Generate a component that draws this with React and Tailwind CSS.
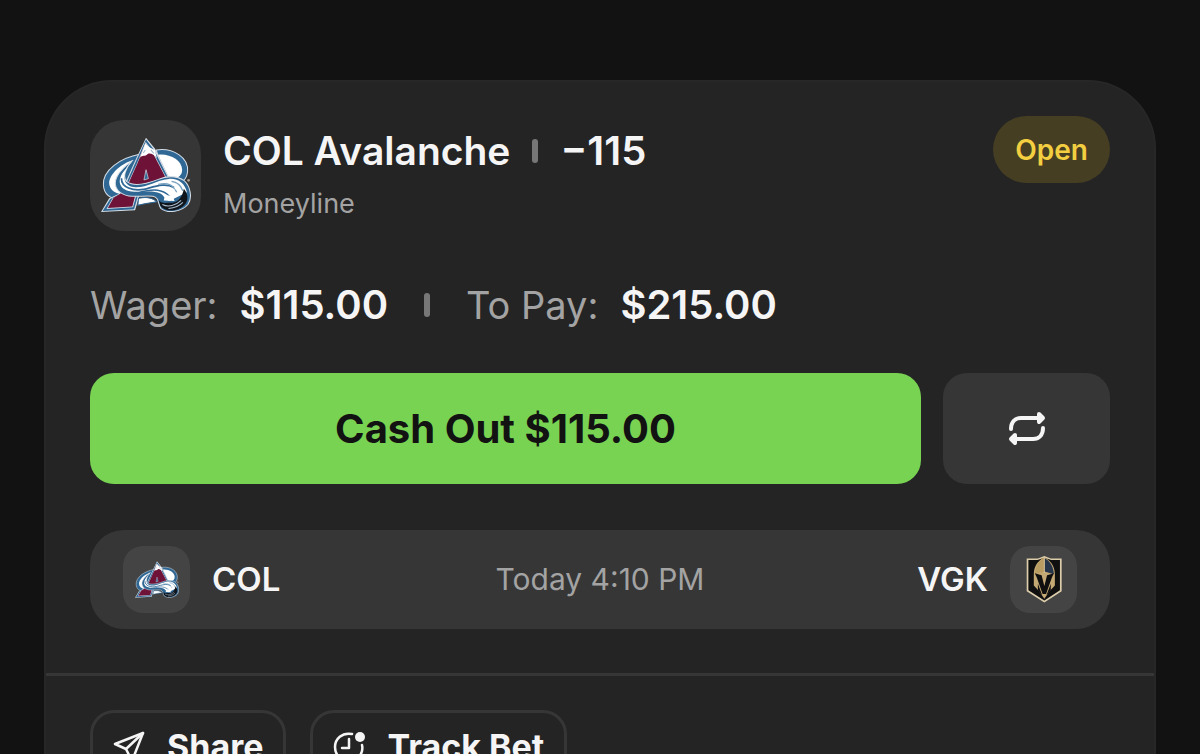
function AvalancheLogo({ className }) {
  return (
    <svg viewBox="50 72 264 224" className={className} aria-hidden="true">
      {/* ring behind the letter */}
      <path d="M212 110C262 103 308 132 304 174C302 192 294 202 280 208L236 188Z" fill="#2f6795" stroke="#d5dde5" strokeWidth="3" />
      <path d="M217 124C252 120 287 140 288 168C288 184 276 194 262 192L246 186Z" fill="#fff" />
      <path d="M166 122C104 134 55 170 57 212C58 240 78 255 112 258L150 262L150 180Z" fill="#2f6795" stroke="#d5dde5" strokeWidth="3" />
      <path d="M146 139C104 152 74 184 74 208C75 226 88 236 108 240C94 214 108 178 146 139Z" fill="#fff" />

      {/* letter */}
      <path d="M182 74L208 106L250 190L226 216L168 226L150 287L50 292L74 252L108 236L148 146Z" fill="#d5dde5" />
      <path d="M182 79L205 109L246 190L224 213L164 224L147 284L55 289L77 254L112 236L151 147Z" fill="#2f6795" />
      <path d="M181 87L201 113L241 190L220 210L160 220L144 278L66 283L84 252L118 232L156 148Z" fill="#d5dde5" />
      <path d="M181 91L200 115L239 190L215 208L157 218L142 276L70 280L87 250L121 230L157 149Z" fill="#6f1238" />
      <path d="M182 168L189 194L176 198Z" fill="#2f6795" stroke="#d5dde5" strokeWidth="2" />
      <path d="M180 90L164 133C172 122 178 132 188 121C198 119 207 126 214 134L208 110L192 102Z" fill="#fff" />
      <path d="M180 110L174 119M196 110L205 120" stroke="#9fb8cb" strokeWidth="3" fill="none" />

      {/* snow sweep */}
      <path d="M140 143C98 174 80 205 100 229C124 256 170 242 202 246C222 249 216 270 226 282C246 297 286 292 305 270C319 250 312 216 294 200C270 184 240 187 216 197C180 211 144 216 126 203C112 190 122 164 140 143Z" fill="#2f6795" stroke="#d5dde5" strokeWidth="3" />
      <path d="M128 160C98 190 98 216 124 228C154 240 196 224 224 238C235 244 238 256 250 260L302 234C296 208 276 192 248 195C210 199 180 224 146 219C116 214 112 188 128 160Z" fill="#fff" />
      <path d="M110 193C109 220 144 232 178 225C212 216 238 206 264 220" stroke="#2f6795" strokeWidth="5" fill="none" />
      <path d="M158 236C198 225 220 224 242 238L256 251" stroke="#2f6795" strokeWidth="4" fill="none" />
      <path d="M218 211C248 204 262 214 272 234M257 202C274 204 284 213 290 230" stroke="#77a1bf" strokeWidth="4" fill="none" />
      <path d="M160 252C178 248 200 249 214 262C200 264 184 266 158 272Z" fill="#fff" stroke="#2f6795" strokeWidth="3" />
      <path d="M220 258C231 270 246 263 260 265C277 264 289 247 293 224C309 243 306 264 290 276C270 292 237 292 224 274Z" fill="#10151b" />
      <path d="M272 208L280 229L264 224L274 246L256 238L266 260L234 258L238 242L254 244L246 226L264 232Z" fill="#fff" />
      <path d="M230 270C247 279 270 273 285 258M248 282C267 280 279 276 290 264" stroke="#a9bdcd" strokeWidth="3" fill="none" />
      <circle cx="307" cy="199" r="4" fill="#a59b91" />
    </svg>
  );
}

function KnightsLogo({ className }) {
  return (
    <svg viewBox="66 50 106 138" className={className} aria-hidden="true">
      <path d="M68 57H101L120 50L139 57H171V154L120 187L68 154Z" fill="#dccdab" />
      <path d="M73 62H100L120 55L140 62H166V151L120 181L73 151Z" fill="#100f10" />
      {/* helmet */}
      <path d="M120 54C101 64 90 80 89 102V137L104 153L120 176L136 153L151 137V102C150 80 139 64 120 54Z" fill="#c5a974" />
      <path d="M121 56C138 67 147 82 148 104L121 96Z" fill="#26354a" />
      <path d="M119 56C102 67 94 82 92 104L119 96Z" fill="#b99c62" />
      {/* visor */}
      <path d="M92 101L112 107L120 138L128 107L148 101L142 114L125 162H115L98 114Z" fill="#100f10" />
      <path d="M101 132L114 166L101 151ZM139 132L126 166L139 151Z" fill="#100f10" />
      <path d="M120 52V100" stroke="#e1d1aa" strokeWidth="2" />
    </svg>
  );
}

function RepeatIcon() {
  return (
    <svg viewBox="0 0 38 36" className="h-9 w-[38px]" fill="none" stroke="currentColor" strokeWidth="4" strokeLinecap="round" strokeLinejoin="round" aria-hidden="true">
      <path d="M3 18C3 11 7 7 13 7H32" />
      <path d="M31 3L35 7L31 11Z" fill="currentColor" />
      <path d="M35 17C35 24 31 28 25 28H6" />
      <path d="M7 24L3 28L7 32Z" fill="currentColor" />
    </svg>
  );
}

function ShareIcon() {
  return (
    <svg viewBox="0 0 32 32" className="size-8" fill="none" stroke="currentColor" strokeWidth="2.5" strokeLinecap="round" strokeLinejoin="round" aria-hidden="true">
      <path d="M30 2L2 13L13 18L19 30Z" />
      <path d="M30 2L13 18" />
    </svg>
  );
}

function TrackIcon() {
  return (
    <svg viewBox="0 0 32 32" className="size-8" fill="none" stroke="currentColor" strokeWidth="2.5" strokeLinecap="round" aria-hidden="true">
      <path d="M19 3C9 1 2 8 2 16C2 24 8 30 16 30C24 30 31 23 29 14" />
      <path d="M16 8V17H9" strokeLinejoin="round" />
      <circle cx="27" cy="6" r="5" fill="currentColor" stroke="none" />
    </svg>
  );
}

function Divider() {
  return <span className="block h-6 w-[6px] shrink-0 rounded-full bg-[#777777]" />;
}

function ActionButton({ icon, label }) {
  return (
    <button type="button" className="flex items-center gap-[22px] rounded-3xl border-[3px] border-[#363636] px-5 py-3 text-[34px] leading-[44px] font-bold">
      {icon}
      {label}
    </button>
  );
}

export default function App() {
  return (
    <main className="h-screen overflow-hidden bg-[#121212] px-11 pt-20 font-['Inter',sans-serif] text-[#f5f5f5]">
      <article className="rounded-t-[68px] border-2 border-b-0 border-[#272727] bg-[#242424]">
        <div className="px-11 pb-11">
          {/* Bet header */}
          <header className="flex items-start gap-[22px] pt-[38px]">
            <div className="flex size-[111px] shrink-0 items-center justify-center rounded-[34px] bg-[#363636]">
              <AvalancheLogo className="w-[90px]" />
            </div>
            <div className="flex-1 pt-2">
              <div className="flex items-center gap-[22px]">
                <h1 className="text-[39px] leading-[46px] font-semibold">COL Avalanche</h1>
                <Divider />
                <span className="text-[40px] leading-[46px] font-semibold">−115</span>
              </div>
              <p className="mt-[10px] text-[27px] leading-[40px] text-[#a3a3a3]">Moneyline</p>
            </div>
            <span className="-mt-1 flex h-[67px] items-center rounded-full bg-[#453e22] px-[22px] text-[28px] font-semibold text-[#f2ce40]">
              Open
            </span>
          </header>

          {/* Amounts */}
          <dl className="mt-[50px] flex items-center text-[40px] leading-[48px]">
            <dt className="text-[38px] text-[#a3a3a3]">Wager:</dt>
            <dd className="ml-[22px] font-semibold">$115.00</dd>
            <dd className="mx-9"><Divider /></dd>
            <dt className="text-[38px] text-[#a3a3a3]">To Pay:</dt>
            <dd className="ml-[22px] font-semibold">$215.00</dd>
          </dl>

          <div className="mt-11 flex gap-[22px]">
            <button type="button" className="h-[111px] flex-1 rounded-3xl bg-[#79d353] text-[40px] font-bold text-[#121212]">
              Cash Out $115.00
            </button>
            <button type="button" aria-label="Repeat bet" className="flex h-[111px] w-[167px] items-center justify-center rounded-3xl bg-[#363636]">
              <RepeatIcon />
            </button>
          </div>

          {/* Matchup */}
          <section className="mt-[46px] grid h-[99px] grid-cols-[1fr_auto_1fr] items-center rounded-[34px] bg-[#363636] px-[33px] text-[33px] font-semibold">
            <div className="flex items-center gap-[22px]">
              <span className="flex size-[67px] items-center justify-center rounded-[20px] bg-[#444444]">
                <AvalancheLogo className="w-11" />
              </span>
              COL
            </div>
            <time className="text-[30px] font-normal text-[#a3a3a3]">Today 4:10 PM</time>
            <div className="flex items-center justify-end gap-[22px]">
              VGK
              <span className="flex size-[67px] items-center justify-center rounded-[20px] bg-[#444444]">
                <KnightsLogo className="w-9" />
              </span>
            </div>
          </section>
        </div>

        <footer className="flex gap-6 border-t-[3px] border-[#363636] px-11 py-[34px]">
          <ActionButton icon={<ShareIcon />} label="Share" />
          <ActionButton icon={<TrackIcon />} label="Track Bet" />
        </footer>
      </article>
    </main>
  );
}
